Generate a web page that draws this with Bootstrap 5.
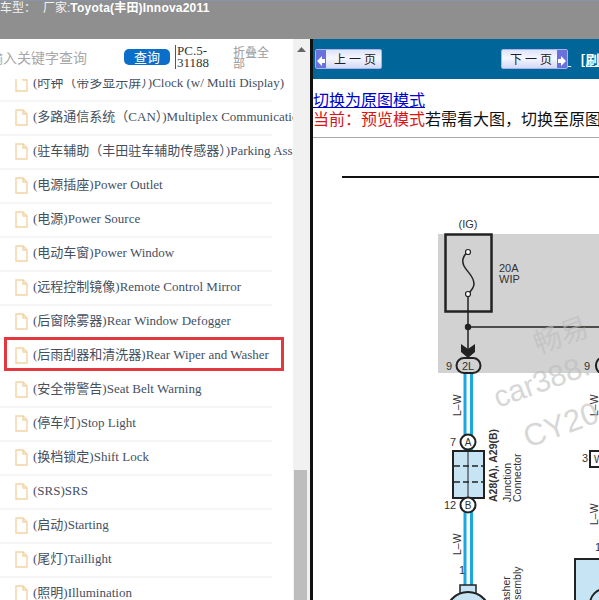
<!DOCTYPE html>
<html lang="zh">
<head>
  <meta charset="UTF-8" />
  <title>Innova2011</title>
  <link href="https://cdn.jsdelivr.net/npm/bootstrap@5.3.3/dist/css/bootstrap.min.css" rel="stylesheet">
  <style>
    html, body { height: 600px; overflow: hidden; background: #fff; }
    .topbar { height: 39px; background: #8f8f8f; border-top: 1px solid #8b93a6; color: #f2f2f2; font: 12px/15px "Liberation Sans", "Noto Sans CJK SC", sans-serif; }
    .topbar b { color: #fff; letter-spacing: .2px; }
    .topbar span { margin-right: 7px; }
    .page-wrap { height: 561px; }
    .side { width: 310px; flex: none; }
    .side-main { width: 293px; flex: none; overflow: hidden; }
    .searchrow { height: 40px; padding-bottom: 4px; background: #fff; position: relative; z-index: 1; }
    .kw { width: 135px; flex: none; margin-left: -11px; color: #a8a8a8; font: 14px "Noto Sans CJK SC", sans-serif; white-space: nowrap; }
    .qbtn { width: 46px; height: 16px; background: #0b6fc9; color: #fff; border-radius: 5px; font: 13px/16px "Noto Sans CJK SC", sans-serif; text-align: center; }
    .pcno { width: 31px; margin-left: 5px; border-left: 1px solid #555; font: 13px/12px "Liberation Serif", serif; color: #333; padding-left: 1px; }
    .foldall { width: 38px; margin-left: 27px; color: #9a9a9a; font: 12px/11px "Noto Sans CJK SC", sans-serif; }
    .treelist { margin-top: -11px; padding: 0; list-style: none; }
    .treerow { height: 34px; width: 272px; border-bottom: 2px solid #f6f6f6; padding-left: 15px; padding-bottom: 2px; font: 13px/30px "Liberation Serif", "Noto Sans CJK SC", serif; color: #45505f; white-space: nowrap; display: flex; align-items: center; gap: 5px; }
    .treerow.picked { border-bottom-color: transparent; position: relative; }
    .treerow.picked::after { content: ""; position: absolute; left: 4px; top: -3px; width: 280px; height: 34px; border: 3px solid #e2383f; }
    .filegl { flex: none; }
    .scrolltrack { width: 17px; flex: none; background: #f1f1f1; position: relative; }
    .scrollup { height: 17px; text-align: center; }
    .scrollthumb { position: absolute; left: 1px; top: 431px; width: 13px; height: 130px; background: #bdbdbd; }
    .splitter { width: 3px; flex: none; background: #111; }
    .docpane { width: 286px; flex: none; overflow: hidden; }
    .navstrip { height: 40px; background: #006699; }
    .pagebtn { height: 20px; width: 67px; flex: none; background: linear-gradient(#dfe3fb, #f6f7ff 45%, #d4d8f6); border: 1px solid #aab2ea; border-radius: 2px; font: 12px/18px "Noto Sans CJK SC", sans-serif; color: #222; letter-spacing: 3px; white-space: nowrap; }
    .pagebtn-next { margin-left: 119px; padding-left: 8px; }
    .pagebtn-prev { margin-left: 2px; }
    .pagearr { width: 10px; height: 18px; background: #6a70dc; flex: none; }
    .refresh { color: #fff; font: bold 14px "Noto Sans CJK SC", sans-serif; text-decoration: underline; white-space: nowrap; }
    .refresh-main { margin-left: 9px; }
    .modebox { height: 59px; padding-top: 11px; border-bottom: 1px solid #aaa; font: 16px/19px "Noto Sans CJK SC", sans-serif; white-space: nowrap; color: #111; }
    .modebox a { color: #0000cc; }
    .redtxt { color: #d81515; }
    .drawing { display: block; }
    .drawing text { font-family: "Liberation Sans", sans-serif; fill: #333; }
    .drawing text.wm { fill: #bdbdbd; opacity: .6; }
    .drawing text.wm-cjk { font-family: "Noto Sans CJK SC", sans-serif; }
  </style>
</head>
<body>
  <div class="topbar"><span>车型：</span><span>厂家:<b>Toyota(丰田)Innova2011</b></span></div>

  <div class="d-flex page-wrap">
    <div class="side d-flex">
      <div class="side-main">
        <div class="searchrow d-flex align-items-center">
          <div class="kw">输入关键字查询</div>
          <div class="qbtn flex-shrink-0">查询</div>
          <div class="pcno flex-shrink-0">PC.5-31188</div>
          <div class="foldall flex-shrink-0">折叠全部</div>
        </div>
        <ul class="treelist" id="tree"></ul>
      </div>
      <div class="scrolltrack">
        <div class="scrollup"><svg width="9" height="17" viewBox="0 0 9 17"><path d="M0 8 L4.5 3 L9 8Z" fill="#666"/></svg></div>
        <div class="scrollthumb"></div>
      </div>
    </div>
    <div class="splitter"></div>
    <div class="docpane">
      <div class="navstrip d-flex align-items-center">
        <div class="pagebtn pagebtn-prev d-flex align-items-center gap-2">
          <div class="pagearr"><svg width="10" height="18" viewBox="0 0 10 18"><path d="M1 9 L6 4 V7 H9 V11 H6 V14Z" fill="#fff"/></svg></div><span>上一页</span>
        </div>
        <div class="pagebtn pagebtn-next d-flex align-items-center justify-content-between">
          <span>下一页</span><div class="pagearr"><svg width="10" height="18" viewBox="0 0 10 18"><path d="M9 9 L4 4 V7 H1 V11 H4 V14Z" fill="#fff"/></svg></div>
        </div>
        <span class="refresh">&nbsp;</span>
        <span class="refresh refresh-main">[刷新]</span>
      </div>
      <div class="modebox">
        <a href="#">切换为原图模式</a><br>
        <span class="redtxt">当前：预览模式</span>若需看大图，切换至原图模式
      </div>
      <svg class="drawing" width="287" height="462" viewBox="313 138 287 462">
        <rect x="342" y="176" width="258" height="2" fill="#111"/>
        <rect x="438" y="234" width="162" height="139" fill="#d2d2d2"/>
        <rect x="445.5" y="234.5" width="46" height="77" fill="none" stroke="#222" stroke-width="2.5"/>
        <text x="468" y="228" font-size="11" text-anchor="middle">(IG)</text>
        <text x="499" y="272" font-size="11">20A</text>
        <text x="499" y="283" font-size="11">WIP</text>
        <path d="M468 252 C462 256 462 262 464 266 C467 272 474 276 474 284 C474 288 471 291 468 294" fill="none" stroke="#222" stroke-width="1.5"/>
        <circle cx="468" cy="252" r="2.5" fill="#fff" stroke="#222" stroke-width="1.2"/>
        <circle cx="468" cy="294" r="2.5" fill="#fff" stroke="#222" stroke-width="1.2"/>
        <path d="M468 296 V350 M468 327 H600" stroke="#222" stroke-width="1.5"/>
        <circle cx="468" cy="327" r="3.2" fill="#222"/>
        <path d="M461 344 L468 349 L475 344 V352 L468 358 L461 352Z" fill="#222"/>
        <path d="M465 373 V595 M471.5 373 V595" stroke="#1ba8e0" stroke-width="3"/>
        <rect x="456.5" y="358" width="24" height="15" rx="7.5" fill="#d2d2d2" stroke="#222" stroke-width="2"/>
        <text x="468" y="370" font-size="11" text-anchor="middle">2L</text>
        <text x="446" y="370" font-size="11">9</text>
        <text x="584" y="370" font-size="11">9</text>
        <rect x="596" y="358" width="12" height="15" rx="7" fill="#d2d2d2" stroke="#222" stroke-width="2"/>
        <rect x="453" y="451" width="31" height="47" fill="#c6e4f4" stroke="#222" stroke-width="2"/>
        <path d="M468 451 V498" stroke="#222" stroke-width="1"/>
        <path d="M454 466 H484 M454 482 H484" stroke="#222" stroke-width="1.5" stroke-dasharray="6 3"/>
        <circle cx="468" cy="442" r="7.5" fill="#fff" stroke="#222" stroke-width="2"/>
        <circle cx="468" cy="505" r="7.5" fill="#fff" stroke="#222" stroke-width="2"/>
        <text x="468" y="446" font-size="10" text-anchor="middle">A</text>
        <text x="468" y="509" font-size="10" text-anchor="middle">B</text>
        <text x="450" y="446" font-size="11">7</text>
        <text x="444" y="509" font-size="11">12</text>
        <text x="459" y="574" font-size="11">1</text>
        <text transform="translate(461 416) rotate(-90)" font-size="10.5">L–W</text>
        <text transform="translate(461 555) rotate(-90)" font-size="10.5">L–W</text>
        <text transform="translate(497 502) rotate(-90)" font-size="10.5" font-weight="700">A28(A), A29(B)</text>
        <text transform="translate(511 502) rotate(-90)" font-size="10.5">Junction</text>
        <text transform="translate(521 502) rotate(-90)" font-size="10.5">Connector</text>
        <text transform="translate(510 612) rotate(-90)" font-size="10.5">Washer</text>
        <text transform="translate(521 612) rotate(-90)" font-size="10.5">Assembly</text>
        <rect x="460" y="585" width="16" height="9" fill="#c6e4f4" stroke="#222" stroke-width="1.5"/>
        <circle cx="468" cy="614" r="22" fill="#c6e4f4" stroke="#222" stroke-width="2"/>
        <text transform="translate(598 416) rotate(-90)" font-size="10.5">L–W</text>
        <text transform="translate(598 525) rotate(-90)" font-size="10.5">L–W</text>
        <text x="582" y="462" font-size="11">3</text>
        <rect x="590" y="451" width="14" height="16" fill="#fff" stroke="#222" stroke-width="2"/>
        <text x="594" y="463" font-size="10">W</text>
        <text x="595" y="551" font-size="11">1</text>
        <rect x="575" y="559" width="30" height="50" fill="#c6e4f4" stroke="#222" stroke-width="2"/>
        <circle cx="605" cy="604" r="15" fill="none" stroke="#222" stroke-width="2"/>
        <text class="wm wm-cjk" transform="translate(538 354) rotate(-20)" font-size="28">畅易</text>
        <text class="wm" transform="translate(498 408) rotate(-20)" font-size="30">car388.</text>
        <text class="wm" transform="translate(528 448) rotate(-20)" font-size="31">CY20</text>
      </svg>
    </div>
  </div>

  <script>
    // 列表数据
    const items = [
      '(时钟（带多显示屏）)Clock (w/ Multi Display)',
      '(多路通信系统（CAN）)Multiplex Communication',
      '(驻车辅助（丰田驻车辅助传感器）)Parking Assist',
      '(电源插座)Power Outlet',
      '(电源)Power Source',
      '(电动车窗)Power Window',
      '(远程控制镜像)Remote Control Mirror',
      '(后窗除雾器)Rear Window Defogger',
      '(后雨刮器和清洗器)Rear Wiper and Washer',
      '(安全带警告)Seat Belt Warning',
      '(停车灯)Stop Light',
      '(换档锁定)Shift Lock',
      '(SRS)SRS',
      '(启动)Starting',
      '(尾灯)Taillight',
      '(照明)Illumination'
    ];
    const fileIcon = '<svg class="filegl" width="13" height="17" viewBox="0 0 13 17"><path d="M1 1 H8 L12 5 V16 H1Z M8 1 V5 H12" fill="#fff" stroke="#f5d3a4" stroke-width="1.4"/></svg>';
    document.getElementById('tree').innerHTML = items.map((t, i) =>
      `<li class="treerow${i === 8 ? ' picked' : ''}">${fileIcon}<span>${t}</span></li>`
    ).join('');
  </script>
</body>
</html>
